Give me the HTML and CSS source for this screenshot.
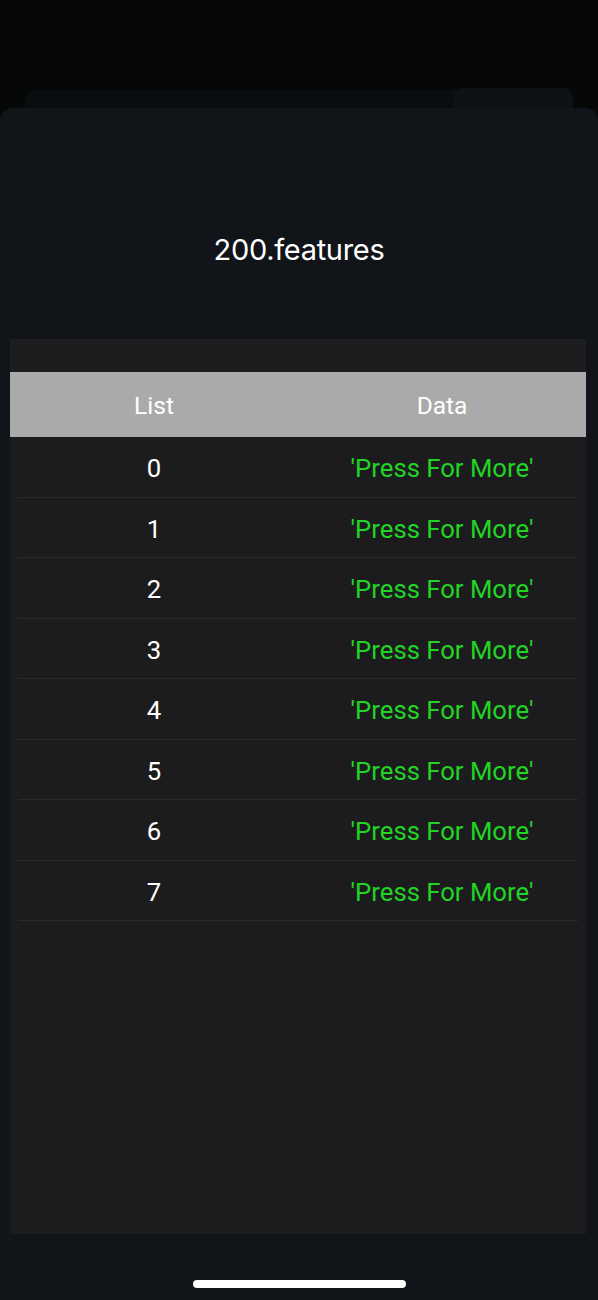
FILE: index.html
```html
<!DOCTYPE html>
<html>
<head>
<meta charset="utf-8">
<link rel="stylesheet" href="styles.css">
</head>
<body>
<div class="screen">
  <div class="peek"><div class="peek-tab"></div></div>
  <div class="sheet">
    <h1 class="title">200.features</h1>
    <div class="table">
      <div class="table-top"></div>
      <div class="thead">
        <div class="cell">List</div>
        <div class="cell">Data</div>
      </div>
      <div class="tbody">
        <div class="row"><div class="cell num">0</div><div class="cell link">'Press For More'</div></div>
        <div class="row"><div class="cell num">1</div><div class="cell link">'Press For More'</div></div>
        <div class="row"><div class="cell num">2</div><div class="cell link">'Press For More'</div></div>
        <div class="row"><div class="cell num">3</div><div class="cell link">'Press For More'</div></div>
        <div class="row"><div class="cell num">4</div><div class="cell link">'Press For More'</div></div>
        <div class="row"><div class="cell num">5</div><div class="cell link">'Press For More'</div></div>
        <div class="row"><div class="cell num">6</div><div class="cell link">'Press For More'</div></div>
        <div class="row"><div class="cell num">7</div><div class="cell link">'Press For More'</div></div>
      </div>
    </div>
    <div class="home-bar"><div class="home-indicator"></div></div>
  </div>
</div>
</body>
</html>
```
FILE: styles.css
```css
* { box-sizing: border-box; }
html, body { margin: 0; padding: 0; }
body {
  background: #050806;
  font-family: Roboto, "Liberation Sans", sans-serif;
  color: #ffffff;
  width: 598px;
  height: 1300px;
  overflow: hidden;
}
.screen {
  display: flex;
  flex-direction: column;
  height: 1300px;
  padding-top: 90px;
}
.peek {
  height: 18px;
  margin: 0 25px;
  background: #0a0d10;
  border-radius: 10px 10px 0 0;
  display: flex;
  justify-content: flex-end;
}
.peek-tab {
  width: 120px;
  height: 20px;
  margin-top: -2px;
  border-radius: 10px 10px 0 0;
  background: #0f1215;
}
.sheet {
  flex: 1;
  background: #111418;
  border-radius: 12px 12px 0 0;
  display: flex;
  flex-direction: column;
}
.title {
  margin: 0;
  padding-top: 125px;
  height: 231px;
  text-align: center;
  font-family: Inter, Roboto, sans-serif;
  font-weight: 400;
  font-size: 29px;
  line-height: 34px;
  letter-spacing: -0.3px;
}
.table {
  margin: 0 12px 0 10px;
  height: 895px;
  background: #1c1c1e;
  display: flex;
  flex-direction: column;
}
.table-top {
  height: 33px;
  background: #1d1d1f;
}
.thead {
  height: 65px;
  background: #aaaaaa;
  display: grid;
  grid-template-columns: 288px 288px;
  align-items: center;
  font-size: 24.5px;
}
.cell { text-align: center; }
.thead .cell { padding-top: 1px; }
.row {
  height: 60.5px;
  display: grid;
  grid-template-columns: 288px 288px;
  align-items: center;
  font-size: 25.7px;
  background: linear-gradient(#2b2b2d, #2b2b2d) no-repeat center bottom / 560px 1px;
}
.row .cell { padding-top: 2px; }
.row .link { color: #22d423; }
.home-bar {
  flex: 1;
  display: flex;
  justify-content: center;
  align-items: flex-end;
  padding-bottom: 12px;
}
.home-indicator {
  width: 213px;
  height: 8px;
  border-radius: 4px;
  background: #ffffff;
}
```
